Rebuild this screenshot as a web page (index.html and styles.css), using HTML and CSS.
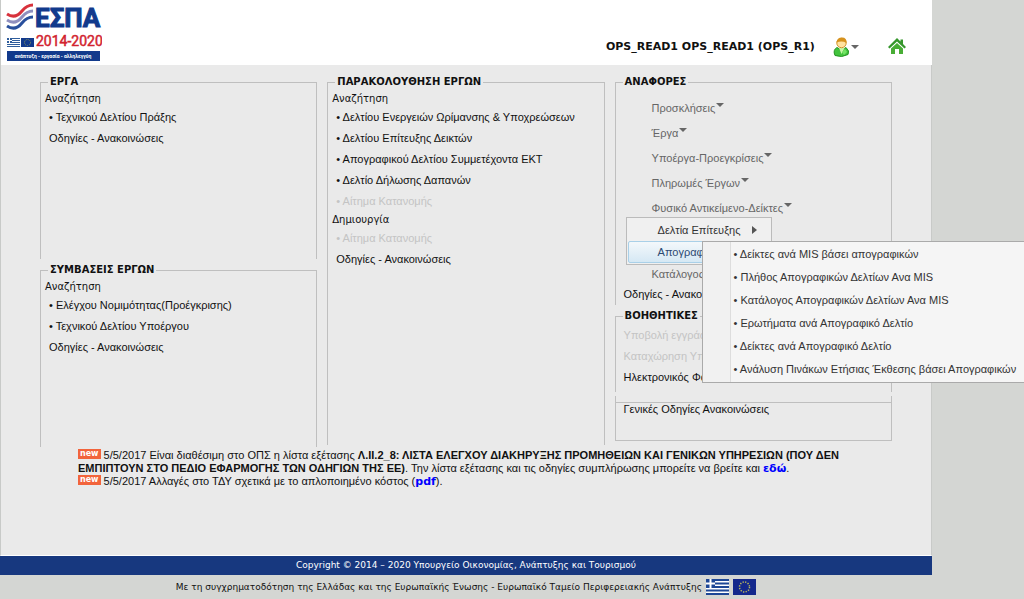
FILE: index.html
```html
<!DOCTYPE html>
<html lang="el">
<head>
<meta charset="utf-8">
<title>ΕΣΠΑ 2014-2020</title>
<link rel="stylesheet" href="styles.css">
</head>
<body>
<div class="page">
  <header class="header">
    <a class="logo" href="#" aria-label="ΕΣΠΑ 2014-2020">
      <svg width="96" height="60" viewBox="0 0 96 60">
        <g fill="none" stroke-width="3">
          <path class="wave-red" d="M1 11C7 15 12 13 16 8S23 2 27 2"/>
          <path class="wave-mid" d="M1 17C7 21 12 19 16 14S23 8 27 8"/>
          <path class="wave-blue" d="M1 23C7 27 12 25 16 20S23 14 27 14"/>
        </g>
        <text class="logo-name" x="29" y="24">ΕΣΠΑ</text>
        <text class="logo-years" x="30" y="43">2014-2020</text>
        <path fill="#fff" d="M1 35h13v9H1z"/>
        <path stroke="#2f5d9c" d="M1 35.500h13M1 37.500h13M1 39.500h13M1 41.500h13M1 43.500h13"/>
        <path fill="#2f5d9c" d="M1 35h5v5H1z"/><path stroke="#fff" d="M3.500 35v5M1 37.500h5"/>
        <path fill="#123a8c" d="M15 35h13v9H15z"/><circle cx="21.500" cy="39.500" r="3" fill="none" stroke="#8d9a58" stroke-dasharray="1 1"/>
        <path fill="#123a8c" d="M1 48h93v10H1z"/>
        <text class="logo-motto" x="47" y="55" text-anchor="middle">ανάπτυξη - εργασία - αλληλεγγύη</text>
      </svg>
    </a>
    <span class="user-name">OPS_READ1 OPS_READ1 (OPS_R1)</span>
    <button class="user-button" type="button" aria-label="Χρήστης">
      <svg width="17" height="20" viewBox="0 0 17 20">
        <path d="M2 18.500Q-.5 13 4 10.500L8.500 13 13 10.500Q17 14 15 17.500 9 21 2 18.500z" fill="#42c33d" stroke="#249522"/>
        <path d="M6 11l2.500 6 3-6z" fill="#c5f5a5"/>
        <path d="M9 15l3-3 2 3-3 3z" fill="#72e263"/>
        <circle cx="8.500" cy="6" r="4.700" fill="#ffe2a0" stroke="#d29328"/>
        <path d="M3.500 5.500Q4 .5 9 .5T13.500 6Q9 3.500 3.500 5.500z" fill="#d6921d"/>
      </svg>
      <span class="caret"></span>
    </button>
    <a class="home" href="#" aria-label="Αρχική">
      <svg width="18" height="17" viewBox="0 0 18 17">
        <path fill="#35962b" d="M9 0L0 9l1.500 1.500L9 3.500l7.500 7L18 9l-3-3V1.500h-2.500v2z"/>
        <path fill="#48ad35" d="M9 5l6 5.500V16h-4v-5H7v5H3v-5.500z"/>
      </svg>
    </a>
  </header>

  <main class="main">
    <div class="columns">
      <div class="column">
        <fieldset class="box box-half">
          <legend>ΕΡΓΑ</legend>
          <h3>Αναζήτηση</h3>
          <ul class="links">
            <li><a href="#">• Τεχνικού Δελτίου Πράξης</a></li>
            <li><a href="#">Οδηγίες - Ανακοινώσεις</a></li>
          </ul>
        </fieldset>
        <fieldset class="box box-half">
          <legend>ΣΥΜΒΑΣΕΙΣ ΕΡΓΩΝ</legend>
          <h3>Αναζήτηση</h3>
          <ul class="links">
            <li><a href="#">• Ελέγχου Νομιμότητας(Προέγκρισης)</a></li>
            <li><a href="#">• Τεχνικού Δελτίου Υποέργου</a></li>
            <li><a href="#">Οδηγίες - Ανακοινώσεις</a></li>
          </ul>
        </fieldset>
      </div>

      <div class="column">
        <fieldset class="box box-full">
          <legend>ΠΑΡΑΚΟΛΟΥΘΗΣΗ ΕΡΓΩΝ</legend>
          <h3>Αναζήτηση</h3>
          <ul class="links">
            <li><a href="#">• Δελτίου Ενεργειών Ωρίμανσης &amp; Υποχρεώσεων</a></li>
            <li><a href="#">• Δελτίου Επίτευξης Δεικτών</a></li>
            <li><a href="#">• Απογραφικού Δελτίου Συμμετέχοντα ΕΚΤ</a></li>
            <li><a href="#">• Δελτίο Δήλωσης Δαπανών</a></li>
            <li class="disabled">• Αίτημα Κατανομής</li>
          </ul>
          <h3>Δημιουργία</h3>
          <ul class="links">
            <li class="disabled">• Αίτημα Κατανομής</li>
            <li><a href="#">Οδηγίες - Ανακοινώσεις</a></li>
          </ul>
        </fieldset>
      </div>

      <div class="column">
        <fieldset class="box box-reports">
          <legend>ΑΝΑΦΟΡΕΣ</legend>
          <div class="reports">
            <button type="button">Προσκλήσεις<span class="caret"></span></button>
            <button type="button">Έργα<span class="caret"></span></button>
            <button type="button">Υποέργα-Προεγκρίσεις<span class="caret"></span></button>
            <button type="button">Πληρωμές Έργων<span class="caret"></span></button>
            <button type="button">Φυσικό Αντικείμενο-Δείκτες<span class="caret"></span></button>
          </div>
          <div class="menu">
            <button class="menu-item" type="button">Δελτία Επίτευξης<span class="arrow"></span></button>
            <button class="menu-item active" type="button">Απογραφικά</button>
            <ul class="submenu">
              <li><a href="#">• Δείκτες ανά MIS βάσει απογραφικών</a></li>
              <li><a href="#">• Πλήθος Απογραφικών Δελτίων Ανα MIS</a></li>
              <li><a href="#">• Κατάλογος Απογραφικών Δελτίων Ανα MIS</a></li>
              <li><a href="#">• Ερωτήματα ανά Απογραφικό Δελτίο</a></li>
              <li><a href="#">• Δείκτες ανά Απογραφικό Δελτίο</a></li>
              <li><a href="#">• Ανάλυση Πινάκων Ετήσιας Έκθεσης βάσει Απογραφικών</a></li>
            </ul>
          </div>
          <div class="reports reports-last">
            <button type="button">Κατάλογος</button>
          </div>
          <ul class="links">
            <li><a href="#">Οδηγίες - Ανακοινώσεις</a></li>
          </ul>
        </fieldset>
        <fieldset class="box box-support">
          <legend>ΒΟΗΘΗΤΙΚΕΣ</legend>
          <ul class="links">
            <li class="disabled">Υποβολή εγγράφων</li>
            <li class="disabled">Καταχώρηση Υπ</li>
            <li><a href="#">Ηλεκτρονικός Φάκελος</a></li>
          </ul>
        </fieldset>
        <div class="general">
          <ul class="links">
            <li><a href="#">Γενικές Οδηγίες Ανακοινώσεις</a></li>
          </ul>
        </div>
      </div>
    </div>

    <div class="news">
      <p><span class="new">new</span> 5/5/2017 Είναι διαθέσιμη στο ΟΠΣ η λίστα εξέτασης <b>Λ.ΙΙ.2_8: ΛΙΣΤΑ ΕΛΕΓΧΟΥ ΔΙΑΚΗΡΥΞΗΣ ΠΡΟΜΗΘΕΙΩΝ ΚΑΙ ΓΕΝΙΚΩΝ ΥΠΗΡΕΣΙΩΝ (ΠΟΥ ΔΕΝ ΕΜΠΙΠΤΟΥΝ ΣΤΟ ΠΕΔΙΟ ΕΦΑΡΜΟΓΗΣ ΤΩΝ ΟΔΗΓΙΩΝ ΤΗΣ ΕΕ)</b>. Την λίστα εξέτασης και τις οδηγίες συμπλήρωσης μπορείτε να βρείτε και <a href="#">εδώ</a>.</p>
      <p><span class="new">new</span> 5/5/2017 Αλλαγές στο ΤΔΥ σχετικά με το απλοποιημένο κόστος (<a href="#">pdf</a>).</p>
    </div>
  </main>

  <footer>
    <div class="copyright">Copyright © 2014 – 2020 Υπουργείο Οικονομίας, Ανάπτυξης και Τουρισμού</div>
    <div class="funding">
      <span>Με τη συγχρηματοδότηση της Ελλάδας και της Ευρωπαϊκής Ένωσης - Ευρωπαϊκό Ταμείο Περιφερειακής Ανάπτυξης</span>
      <svg width="23" height="16" viewBox="0 0 23 16">
        <path fill="#fff" d="M0 0h23v16H0z"/>
        <path stroke="#1d4796" stroke-width="2" d="M0 1h23M0 4.500h23M0 8h23M0 11.500h23M0 15h23"/>
        <path fill="#1d4796" d="M0 0h9v9H0z"/>
        <path stroke="#fff" stroke-width="2" d="M4.500 0v9M0 4.500h9"/>
      </svg>
      <svg width="23" height="16" viewBox="0 0 23 16">
        <path fill="#14288c" d="M0 0h23v16H0z"/>
        <circle cx="11.500" cy="8" r="5" fill="none" stroke="#b9b85a" stroke-width="1.500" stroke-dasharray="1.300 1.318"/>
      </svg>
    </div>
  </footer>
</div>
</body>
</html>
```
FILE: styles.css
```css
* {
  box-sizing: border-box;
}

body {
  margin: 0;
  background: #d4d6d3;
  color: #111;
  font: 11px/21px "Liberation Sans", Arial, sans-serif;
  overflow-x: hidden;
}

a {
  color: inherit;
  text-decoration: none;
}

button {
  padding: 0;
  border: 0;
  background: none;
  color: inherit;
  font: inherit;
  text-align: left;
  cursor: pointer;
}

ul,
p,
h3 {
  margin: 0;
  padding: 0;
  list-style: none;
}

.page {
  width: 91%;
}

.header {
  display: flex;
  align-items: center;
  height: 65px;
  padding: 0 26px 0 5px;
  border-left: 1px solid #c8cac8;
  background: #fff;
}

.logo {
  margin-right: auto;
  line-height: 0;
}

.wave-red { stroke: #d8323c; }
.wave-mid { stroke: #8f8fbe; }
.wave-blue { stroke: #284f9c; }

.logo-name {
  fill: #123a8c;
  stroke: #123a8c;
  font: bold 26px Roboto, "Liberation Sans", sans-serif;
}

.logo-years {
  fill: #d2232f;
  stroke: #d2232f;
  stroke-width: 0.5px;
  font: 14px Roboto, "Liberation Sans", sans-serif;
}

.logo-motto {
  fill: #fff;
  font: bold 5px Roboto, "Liberation Sans", sans-serif;
}

.user-name {
  margin-top: 28px;
  font: bold 11px/14px "DejaVu Sans", Verdana, sans-serif;
}

.user-button {
  display: flex;
  align-items: center;
  margin: 29px 29px 0 18px;
}

.home {
  margin-top: 27px;
  line-height: 0;
}

.caret {
  display: inline-block;
  margin-left: 1px;
  border: 4px solid transparent;
  border-top-color: #666;
  border-bottom: 0;
}

.main {
  min-height: 491px;
  padding-top: 10px;
  border-left: 1px solid #c8cac8;
  border-right: 1px solid #c8cac8;
  border-bottom: 1px solid #fff;
  background: #eaeaea;
}

.columns {
  display: grid;
  grid-template-columns: repeat(3, minmax(0, 1fr));
  gap: 10px;
  min-height: 373px;
  padding: 0 39px;
}

.column {
  display: flex;
  flex-direction: column;
  gap: 4px;
}

.box {
  min-width: 0;
  margin: 0;
  padding: 2px 4px 0;
  border: 1px solid #bfbfbf;
  border-bottom: 0;
}

.box legend {
  margin-left: 3px;
  padding: 0 2px;
  font: bold 10px/14px "DejaVu Sans", Verdana, sans-serif;
}

.box h3 {
  font: 10px/16px "DejaVu Sans", Verdana, sans-serif;
}

.box-half { min-height: 184px; }
.box-full { min-height: 370px; }
.box-reports { min-height: 230px; }
.box-support { min-height: 83px; }

.links {
  padding-left: 4px;
  white-space: nowrap;
}

.disabled {
  color: #c4c4c4;
}

.reports {
  display: flex;
  flex-direction: column;
  align-items: flex-start;
  padding: 5px 0 0 32px;
  color: #666;
  line-height: 25px;
}

.reports .caret {
  margin-bottom: 5px;
}

.reports-last {
  padding-top: 0;
  line-height: 19px;
}

.menu {
  position: relative;
  width: 146px;
  margin: -4px 0 0 6px;
  padding: 1px;
  border: 1px solid #bbb;
  background: #f0f0f0;
}

.menu-item {
  display: flex;
  align-items: center;
  justify-content: space-between;
  width: 100%;
  height: 22px;
  padding: 0 12px 0 29px;
  border: 1px solid transparent;
  border-radius: 2px;
  color: #333;
}

.menu-item.active {
  border-color: #a9d0e8;
  background: linear-gradient(#f3f8fb, #d5e8f4);
  color: #2c4a72;
}

.arrow {
  border: 4px solid transparent;
  border-left: 5px solid #555;
  border-right: 0;
}

.submenu {
  position: absolute;
  top: 23px;
  left: 75px;
  z-index: 1;
  width: 330px;
  padding: 1px 0 1px 31px;
  border: 1px solid #aaa;
  background: linear-gradient(90deg, #f1f1f1 27px, #ddd 27px, #ddd 28px, #f5f5f5 28px);
  color: #333;
  line-height: 23px;
  white-space: nowrap;
}

.general {
  min-height: 45px;
  padding-top: 6px;
  border: 1px solid #bfbfbf;
  border-top: 0;
}

.general .links {
  padding: 0 0 0 8px;
  border-top: 1px solid #bfbfbf;
  line-height: 13px;
}

.news {
  padding: 1px 70px 0 77px;
  line-height: 13px;
}

.news a {
  color: #00f;
  font: bold 11px/13px "DejaVu Sans", Verdana, sans-serif;
}

.new {
  display: inline-block;
  height: 10px;
  padding: 0 2px;
  background: #f2643c;
  color: #fff;
  font: bold 8px/9px "DejaVu Sans", Verdana, sans-serif;
  vertical-align: top;
}

footer {
  font: 9px/18px "DejaVu Sans", Verdana, sans-serif;
}

.copyright {
  height: 19px;
  background: #17387f;
  color: #fff;
  text-align: center;
}

.funding {
  display: flex;
  align-items: center;
  justify-content: center;
  gap: 4px;
  padding-top: 3px;
}
```
